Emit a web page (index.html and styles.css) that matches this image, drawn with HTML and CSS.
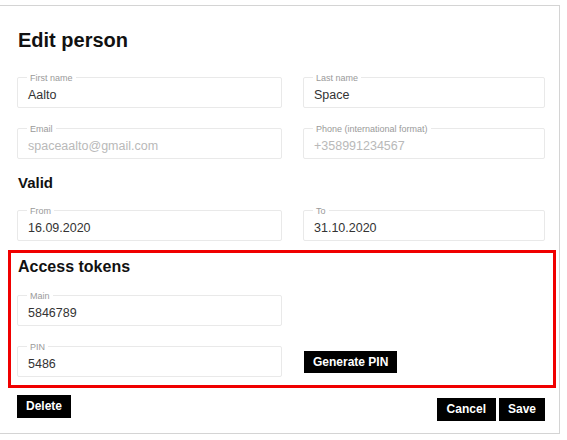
FILE: index.html
```html
<!DOCTYPE html>
<html>
<head>
<meta charset="utf-8">
<link rel="stylesheet" href="styles.css">
</head>
<body>
<div class="card">
  <h1 class="title">Edit person</h1>
  <div class="grid row-first">
    <div class="field"><span class="label">First name</span><span class="value">Aalto</span></div>
    <div class="field"><span class="label">Last name</span><span class="value">Space</span></div>
  </div>
  <div class="grid row-next">
    <div class="field"><span class="label">Email</span><span class="value muted">spaceaalto@gmail.com</span></div>
    <div class="field"><span class="label">Phone (international format)</span><span class="value muted">+358991234567</span></div>
  </div>
  <h2 class="section">Valid</h2>
  <div class="grid row-dates">
    <div class="field"><span class="label">From</span><span class="value">16.09.2020</span></div>
    <div class="field"><span class="label">To</span><span class="value">31.10.2020</span></div>
  </div>
  <div class="tokens">
    <h2 class="section tokens-title">Access tokens</h2>
    <div class="grid row-main">
      <div class="field"><span class="label">Main</span><span class="value">5846789</span></div>
    </div>
    <div class="grid row-pin">
      <div class="field"><span class="label">PIN</span><span class="value">5486</span></div>
      <div class="pin-action"><button class="btn">Generate PIN</button></div>
    </div>
  </div>
  <div class="footer">
    <button class="btn">Delete</button>
    <div class="right-actions">
      <button class="btn btn-wide">Cancel</button>
      <button class="btn">Save</button>
    </div>
  </div>
</div>
</body>
</html>
```
FILE: styles.css
```css
* { box-sizing: border-box; }
html, body { margin: 0; padding: 0; background: #fff; }
body { font-family: "Liberation Sans", Arial, sans-serif; color: #222; }

.card {
  margin-top: 5px;
  width: 560px;
  border-top: 1px solid #d4d4d4;
  border-right: 1px solid #d4d4d4;
  border-bottom: 1px solid #d4d4d4;
  padding: 0 0 12px 17px;
  background: #fff;
}

.title {
  margin: 22px 0 0 1px;
  font-size: 20px;
  line-height: 24px;
  font-weight: bold;
  color: #111;
}

.section {
  margin: 15px 0 0 1px;
  font-size: 15px;
  line-height: 18px;
  font-weight: bold;
  color: #111;
}

.grid {
  display: grid;
  grid-template-columns: 265px 242px;
  column-gap: 21px;
  align-items: center;
}
.row-first { margin-top: 25px; }
.row-next { margin-top: 20px; }
.row-dates { margin-top: 18px; }
.row-main { margin-top: 19px; }
.row-pin { margin-top: 20px; }

.field {
  position: relative;
  height: 31px;
  border: 1px solid #e9e9e9;
  border-radius: 2px;
  padding: 9px 0 0 10px;
}
.label {
  position: absolute;
  top: -5px;
  left: 9px;
  padding: 0 3px;
  background: #fff;
  font-size: 9px;
  line-height: 10px;
  color: #9a9a9a;
}
.value {
  display: block;
  font-size: 12.5px;
  line-height: 16px;
  color: #333;
}
.value.muted { color: #b9b9b9; }

.tokens {
  margin: 9px 0 0 -9px;
  width: 548px;
  border: 3px solid #f00000;
  padding: 4px 0 8px 6px;
}
.tokens-title {
  margin-top: 0;
  font-size: 16px;
  line-height: 19px;
}

.pin-action { display: flex; padding-left: 1px; }

.btn {
  height: 23px;
  padding: 0 9px;
  border: none;
  border-radius: 0;
  background: #000;
  color: #fff;
  font-family: "Liberation Sans", Arial, sans-serif;
  font-size: 12px;
  font-weight: bold;
  line-height: 23px;
  cursor: pointer;
}
.btn-wide { padding: 0 10px; }
.pin-action .btn { height: 22px; line-height: 22px; }

.footer {
  margin-top: 7px;
  width: 528px;
  display: flex;
  justify-content: space-between;
  align-items: flex-start;
}
.right-actions {
  display: flex;
  gap: 3px;
  margin-top: 3px;
}
```
